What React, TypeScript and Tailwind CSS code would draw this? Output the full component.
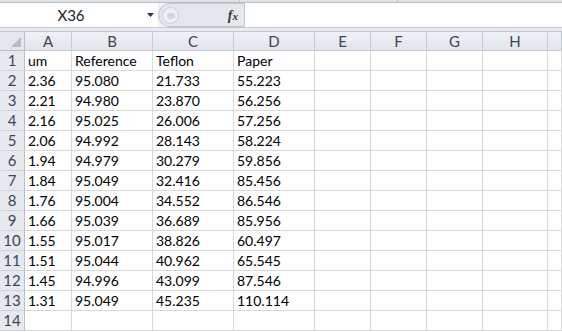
import React from "react";

const cols = [
  { label: "A", w: "w-[47px]" },
  { label: "B", w: "w-[81px]" },
  { label: "C", w: "w-[81px]" },
  { label: "D", w: "w-[81px]" },
  { label: "E", w: "w-[56px]" },
  { label: "F", w: "w-[56px]" },
  { label: "G", w: "w-[56px]" },
  { label: "H", w: "w-[65px]" },
  { label: "", w: "w-[14px]" },
];

const rows: string[][] = [
  ["um", "Reference", "Teflon", "Paper"],
  ["2.36", "95.080", "21.733", "55.223"],
  ["2.21", "94.980", "23.870", "56.256"],
  ["2.16", "95.025", "26.006", "57.256"],
  ["2.06", "94.992", "28.143", "58.224"],
  ["1.94", "94.979", "30.279", "59.856"],
  ["1.84", "95.049", "32.416", "85.456"],
  ["1.76", "95.004", "34.552", "86.546"],
  ["1.66", "95.039", "36.689", "85.956"],
  ["1.55", "95.017", "38.826", "60.497"],
  ["1.51", "95.044", "40.962", "65.545"],
  ["1.45", "94.996", "43.099", "87.546"],
  ["1.31", "95.049", "45.235", "110.114"],
  [],
];

function FormulaBar() {
  return (
    <div className="flex h-[25px] bg-[#eef1f5] border-b border-[#c4c9d0]">
      <div className="relative flex w-[158px] items-center bg-white">
        <span className="w-[142px] text-center text-[15px] text-[#222]">X36</span>
        <svg className="absolute left-[147px] top-[10px]" width="7" height="4" viewBox="0 0 7 4">
          <path d="M0 0h7L3.5 4z" fill="#333" />
        </svg>
      </div>
      <div className="relative flex w-[87px] items-center justify-end rounded-l-full border border-[#c2c7ce] bg-[#e4e8ed] pr-[6px]">
        <div className="absolute left-[3px] top-[3px] flex h-[17px] w-[17px] items-center justify-center rounded-full border border-[#c9ced5] bg-[#eef1f4]">
          <div className="h-[6px] w-[8px] rounded-full bg-[#d2d6dc]" />
        </div>
        <span className="font-['Liberation_Serif',serif] text-[14px] font-bold italic text-[#333]">
          f<span className="text-[11px]">x</span>
        </span>
      </div>
      <div className="flex-1 bg-white" />
    </div>
  );
}

function ColumnHeader() {
  return (
    <div className="flex h-[20px] border-t border-[#c2c7ce]">
      <div className="relative w-[25px] border-r border-b border-[#b9bfc7] bg-[#e4e8ed]">
        <svg className="absolute right-[3px] bottom-[3px]" width="10" height="10" viewBox="0 0 10 10">
          <path d="M10 0V10H0z" fill="#b6bcc4" />
        </svg>
      </div>
      {cols.map((c, i) => (
        <div
          key={i}
          className={`${c.w} flex items-center justify-center border-r border-b border-[#c4cad2] bg-gradient-to-b from-[#eef1f5] to-[#e1e5eb] text-[15px] text-[#3c4654]`}
        >
          {c.label}
        </div>
      ))}
    </div>
  );
}

export default function App() {
  return (
    <div className="h-[332px] w-[562px] overflow-hidden bg-white font-['Lato',sans-serif]">
      <div className="flex h-[3px] bg-[#dfe3e8] border-b border-[#b8bec6]">
        <div className="w-[240px] border-r border-[#b8bec6]" />
        <div className="w-[158px] border-r border-[#b8bec6]" />
      </div>
      <FormulaBar />
      <div className="h-[3px] bg-[#e9edf1]" />
      <ColumnHeader />
      {rows.map((r, ri) => (
        <div key={ri} className="flex h-[20px]">
          <div className="flex w-[25px] items-center justify-center border-r border-b border-r-[#b9bfc7] border-b-[#cfd4da] bg-[#e6e9ee] text-[15px] text-[#3c4654]">
            {ri + 1}
          </div>
          {cols.map((c, ci) => (
            <div
              key={ci}
              className={`${c.w} flex items-end border-r border-b border-[#d9d9d9] pl-[3px] pb-[1px] text-[14px] leading-[17px] text-black`}
            >
              {r[ci] ?? ""}
            </div>
          ))}
        </div>
      ))}
    </div>
  );
}
